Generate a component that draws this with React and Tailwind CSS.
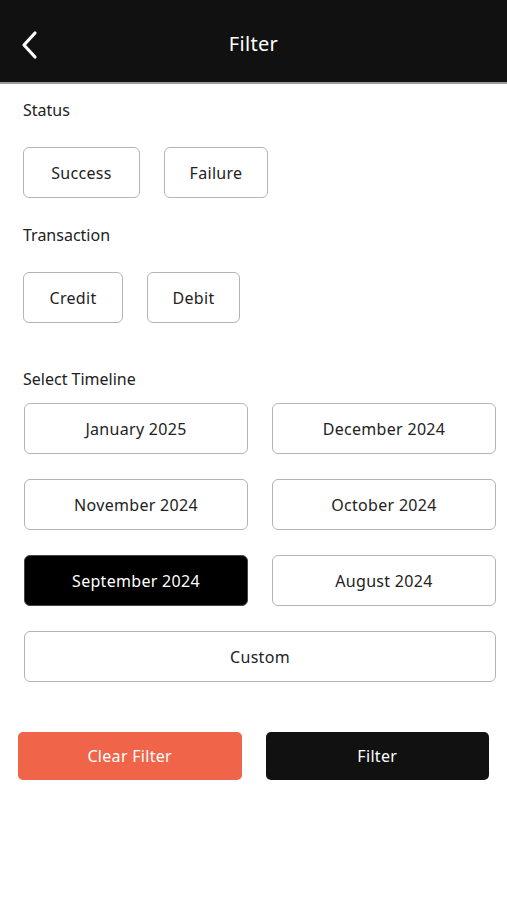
import React from "react";

const months = [
  "January 2025",
  "December 2024",
  "November 2024",
  "October 2024",
  "September 2024",
  "August 2024",
];

const Chip = ({ label, width }) => (
  <button
    className={`h-[51px] ${width} rounded-[6px] border-[1.5px] border-[#b4b4b4] bg-white text-[16px] tracking-[0.3px] text-[#222]`}
  >
    {label}
  </button>
);

const App = () => {
  const selected = "September 2024";

  return (
    <div className="min-h-[900px] w-[507px] bg-white font-['Noto_Sans',sans-serif] text-[#222]">
      {/* Header */}
      <div className="relative flex h-[84px] items-center justify-center border-b-2 border-[#9a9a9a] bg-[#111111] pt-[5px]">
        <svg
          className="absolute left-[18px] top-[29px]"
          width="24"
          height="32"
          viewBox="0 0 24 32"
          fill="none"
        >
          <path
            d="M17 4 L6 16 L17 28"
            stroke="white"
            strokeWidth="3.2"
            strokeLinecap="round"
            strokeLinejoin="round"
          />
        </svg>
        <h1 className="text-[20px] tracking-[0.3px] text-white">Filter</h1>
      </div>

      <div className="px-[23px] pt-[16px]">
        {/* Status */}
        <p className="text-[16px] leading-[20px]">Status</p>
        <div className="mt-[27px] flex gap-[24px]">
          <Chip label="Success" width="w-[117px]" />
          <Chip label="Failure" width="w-[104px]" />
        </div>

        {/* Transaction */}
        <p className="mt-[27px] text-[16px] leading-[20px]">Transaction</p>
        <div className="mt-[27px] flex gap-[24px]">
          <Chip label="Credit" width="w-[100px]" />
          <Chip label="Debit" width="w-[93px]" />
        </div>

        {/* Timeline */}
        <p className="mt-[46px] text-[16px] leading-[20px]">Select Timeline</p>
      </div>

      <div className="mt-[14px] grid grid-cols-2 gap-x-[24px] gap-y-[25px] px-[24px] pr-[11px]">
        {months.map((m) =>
          m === selected ? (
            <button
              key={m}
              className="h-[51px] rounded-[6px] border-[1.5px] border-[#444] bg-black text-[16px] tracking-[0.3px] text-white"
            >
              {m}
            </button>
          ) : (
            <button
              key={m}
              className="h-[51px] rounded-[6px] border-[1.5px] border-[#b4b4b4] bg-white text-[16px] tracking-[0.3px] text-[#222]"
            >
              {m}
            </button>
          )
        )}
        <button className="col-span-2 h-[51px] rounded-[6px] border-[1.5px] border-[#b4b4b4] bg-white text-[16px] tracking-[0.3px] text-[#222]">
          Custom
        </button>
      </div>

      {/* Actions */}
      <div className="mt-[50px] flex gap-[24px] px-[18px]">
        <button className="h-[48px] w-[224px] rounded-[5px] bg-[#f0654a] text-[16px] tracking-[0.3px] text-white">
          Clear Filter
        </button>
        <button className="h-[48px] w-[224px] rounded-[5px] bg-[#111111] text-[16px] tracking-[0.3px] text-white">
          Filter
        </button>
      </div>
    </div>
  );
};

export default App;
